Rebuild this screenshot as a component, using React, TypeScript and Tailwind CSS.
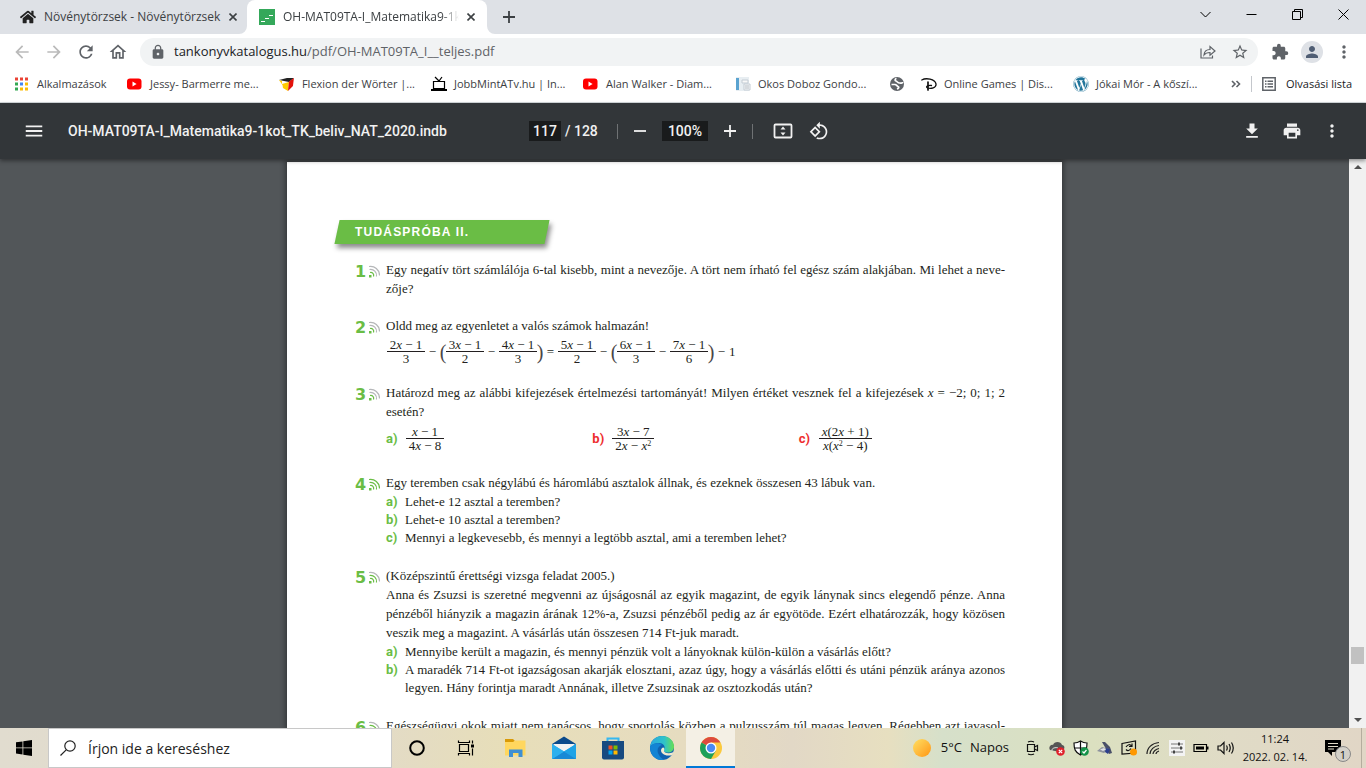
import type { ReactNode } from 'react'
import { FaHome, FaWordpress } from 'react-icons/fa'
import {
  MdArrowBack,
  MdArrowForward,
  MdExtension,
  MdLock,
  MdMenu,
  MdMoreVert,
  MdPerson,
  MdPrint,
  MdRefresh,
  MdOutlineHome,
  MdStarOutline,
} from 'react-icons/md'

function YouTubeIcon() {
  return (
    <svg viewBox="0 0 16 16" className="size-4">
      <rect x="0" y="2.5" width="14.5" height="11" rx="3" fill="#f00" />
      <path d="M5.500 5.600v4.800L9.600 8z" fill="#fff" />
    </svg>
  )
}

function AppsIcon() {
  const colors = ['#ea4335', '#ea4335', '#ea4335', '#34a853', '#4285f4', '#fbbc04', '#34a853', '#fbbc04', '#fbbc04']
  return (
    <svg viewBox="0 0 14 14" className="size-3.5">
      {colors.map((c, i) => (
        <rect key={i} x={(i % 3) * 5} y={Math.floor(i / 3) * 5 + 0.5} width="3" height="3" fill={c} />
      ))}
    </svg>
  )
}

function CubeIcon() {
  return (
    <svg viewBox="0 0 16 16" className="size-4">
      <path d="M0 4l8-2 7 0-5 4z" fill="#222" />
      <path d="M0 4l3 1v3l7-2-1 9-5-3-.5-3z" fill="#fc0" />
      <path d="M10 5.500l5-3.500-1 8-5 5z" fill="#e3120b" />
    </svg>
  )
}

function TvIcon() {
  return (
    <svg viewBox="0 0 16 16" className="size-4" fill="none" stroke="#000" strokeWidth="1.2">
      <path d="M4 1l4 4 3-4M2.5 5.5h11v7h-11z" />
      <path d="M0 14h16" strokeWidth="2" />
    </svg>
  )
}

function DocIcon() {
  return (
    <svg viewBox="0 0 16 16" className="size-4">
      <path d="M1 1h13v14H1z" fill="#e8eef2" />
      <path d="M1 2h3v12H1z" fill="#5aa3d0" />
      <path d="M7 4h6v3H7zM9 8h6v6H9z" fill="#f8f8f8" stroke="#c4ccd4" />
      <path d="M10 10h4M10 12h4" stroke="#b4bcc4" />
    </svg>
  )
}

function GlobeIcon() {
  return (
    <svg viewBox="0 0 16 16" className="size-4">
      <circle cx="8" cy="8" r="7" fill="#5f6368" />
      <path d="M7.500 2.500c-1.500 0-2 2-.5 2.500s1.500 2 3.500 2 3 .5 3-1M2.500 8.500H6c1.500 0 1.500 1.500 3 2s.5 2-1 2.500" stroke="#fff" strokeWidth="1.700" fill="none" />
    </svg>
  )
}

function DisneyIcon() {
  return (
    <svg viewBox="0 0 16 16" className="size-4" fill="none" stroke="#111" strokeLinecap="round">
      <path d="M.8 4C5 1.500 14 3 15 8c.5 4-5 5-8.500 4-2.500-1.200.5-3 4-2.500" strokeWidth="1.300" />
      <path d="M7 6v8" strokeWidth="1.700" />
    </svg>
  )
}

function ListIcon() {
  return (
    <svg viewBox="0 0 14 14" className="size-3.5" fill="none" stroke="#5f6368" strokeWidth="1.500">
      <path d="M.8.8h12.400v12.400H.8z" />
      <path d="M3 4.200h1.500M5.500 4.200H11M3 7h1.500M5.500 7H11M3 9.800h1.500M5.500 9.800H11" />
    </svg>
  )
}

const bookmarks: { icon: ReactNode; label: string }[] = [
  { icon: <YouTubeIcon />, label: 'Jessy- Barmerre me...' },
  { icon: <CubeIcon />, label: 'Flexion der Wörter |...' },
  { icon: <TvIcon />, label: 'JobbMintATv.hu | In...' },
  { icon: <YouTubeIcon />, label: 'Alan Walker - Diam...' },
  { icon: <DocIcon />, label: 'Okos Doboz Gondo...' },
]

function CloseIcon() {
  return (
    <svg viewBox="0 0 8 8" className="size-2" stroke="#3c4043" strokeWidth="1.600">
      <path d="M.5.5l7 7M7.500.5l-7 7" />
    </svg>
  )
}

function TabStrip() {
  return (
    <header className="flex h-[34px] shrink-0 bg-[#dee1e6] text-[12px] text-[#3c4043]">
      <div className="flex w-[247px] items-center pl-5">
        <FaHome className="size-4 text-[#222]" />
        <span className="ml-2 flex-1 whitespace-nowrap">Növénytörzsek - Növénytörzsek</span>
        <button aria-label="Bezárás" className="mr-2 p-0.5">
          <CloseIcon />
        </button>
      </div>
      <div className="relative flex w-60 items-center rounded-t-lg bg-white pl-3">
        <svg viewBox="0 0 8 8" className="absolute bottom-0 -left-2 size-2">
          <path d="M8 0v8H0a8 8 0 0 0 8-8" fill="#fff" />
        </svg>
        <svg viewBox="0 0 8 8" className="absolute -right-2 bottom-0 size-2">
          <path d="M0 0v8h8a8 8 0 0 1-8-8" fill="#fff" />
        </svg>
        <svg viewBox="0 0 16 16" className="size-4">
          <path d="M0 0h16v16H0z" fill="#34a85a" />
          <path d="M2 12.500h4M6 9.500h4M10 6.500h4" stroke="#fff" />
        </svg>
        <span className="ml-2 w-[176px] overflow-hidden whitespace-nowrap [mask-image:linear-gradient(to_right,#000_90%,transparent)]">
          OH-MAT09TA-I_Matematika9-1kot
        </span>
        <button aria-label="Bezárás" className="ml-1.5 p-0.5">
          <CloseIcon />
        </button>
      </div>
      <button aria-label="Új lap" className="ml-4 self-center">
        <svg viewBox="0 0 12 12" className="size-3" stroke="#3c4043" strokeWidth="1.800">
          <path d="M6 0v12M0 6h12" />
        </svg>
      </button>
      <div className="ml-auto flex h-7">
        {[
          ['Lapkeresés', 'M.5 3l5 5 5-5'],
          ['Kis méret', 'M.5 5.500h10'],
          ['Előző méret', 'M.5 2.500h8v8h-8zM2.500 2.500v-2h8v8h-2'],
          ['Bezárás', 'M.5.5l10 10M10.500.5l-10 10'],
        ].map(([label, d]) => (
          <button key={label} aria-label={label} className="grid w-[46px] place-items-center">
            <svg viewBox="0 0 11 11" className="size-[11px]" fill="none" stroke="#000" strokeWidth="1">
              <path d={d} />
            </svg>
          </button>
        ))}
      </div>
    </header>
  )
}

function IconButton({ label, children }: { label: string; children: ReactNode }) {
  return (
    <button aria-label={label} className="grid size-8 shrink-0 place-items-center">
      {children}
    </button>
  )
}

function AddressBar() {
  return (
    <div className="flex h-9 shrink-0 items-center px-1.5 text-[#5f6368]">
      <IconButton label="Vissza"><MdArrowBack className="size-5 text-[#bababa]" /></IconButton>
      <IconButton label="Előre"><MdArrowForward className="size-5 text-[#bababa]" /></IconButton>
      <IconButton label="Újratöltés"><MdRefresh className="size-5" /></IconButton>
      <IconButton label="Kezdőlap"><MdOutlineHome className="size-5" /></IconButton>
      <div className="mx-1.5 flex h-7 flex-1 items-center rounded-full bg-[#f1f3f4] pr-0.5 pl-2.5">
        <MdLock className="size-4" />
        <a href="#" className="ml-2 flex-1 text-[13px] whitespace-nowrap">
          <span className="text-[#202124]">tankonyvkatalogus.hu</span>/pdf/OH-MAT09TA_I__teljes.pdf
        </a>
        <IconButton label="Megosztás">
          <svg viewBox="0 0 16 16" className="size-4" fill="none" stroke="#5f6368" strokeWidth="1.200">
            <path d="M1 4.500v9.500h11.500v-2.500M4 11c.3-4 2.500-5.500 6-5.500V2.500l5 4.500-5 4.300V8.500C7.500 8.500 5.500 9 4 11z" />
          </svg>
        </IconButton>
        <IconButton label="Könyvjelző"><MdStarOutline className="size-[18px]" /></IconButton>
      </div>
      <IconButton label="Bővítmények"><MdExtension className="size-[18px]" /></IconButton>
      <IconButton label="Profil">
        <span className="grid size-[22px] place-items-center rounded-full bg-[#dee1e6]">
          <MdPerson className="size-[18px] text-[#505e74]" />
        </span>
      </IconButton>
      <IconButton label="Menü"><MdMoreVert className="size-5" /></IconButton>
    </div>
  )
}

function Bookmark({ icon, label }: { icon: ReactNode; label: string }) {
  return (
    <a href="#" className="flex w-[136px] items-center gap-[7px] whitespace-nowrap">
      {icon}
      {label}
    </a>
  )
}

function BookmarksBar() {
  return (
    <nav className="flex h-8 shrink-0 items-center gap-4 pr-3.5 pb-1 pl-[15px] text-[11px] text-[#3c4043]">
      <a href="#" className="flex w-24 items-center gap-2">
        <AppsIcon />
        Alkalmazások
      </a>
      {bookmarks.map((b) => (
        <Bookmark key={b.label} {...b} />
      ))}
      <a href="#" aria-label="Weboldal" className="ml-0.5"><GlobeIcon /></a>
      <Bookmark icon={<DisneyIcon />} label="Online Games | Dis..." />
      <Bookmark icon={<FaWordpress className="size-4 text-[#21759b]" />} label="Jókai Mór - A kőszí..." />
      <div className="ml-auto flex items-center whitespace-nowrap">
        <button aria-label="További könyvjelzők">
          <svg viewBox="0 0 10 8" className="h-2 w-2.5" fill="none" stroke="#5f6368" strokeWidth="1.600">
            <path d="M1 1l3 3-3 3M5.500 1l3 3-3 3" />
          </svg>
        </button>
        <span className="mx-2.5 h-4 w-px bg-[#c4c7cc]" />
        <button className="flex items-center gap-2.5 text-[#202124]">
          <ListIcon />
          Olvasási lista
        </button>
      </div>
    </nav>
  )
}

function PdfToolbar() {
  return (
    <div className="z-10 flex h-14 shrink-0 items-center bg-[#323639] font-[Roboto] text-[14px] font-medium text-[#f1f1f1] shadow-[0_2px_4px_rgba(0,0,0,0.4)]">
      <div className="flex flex-1 items-center gap-[18px] pl-[18px]">
        <IconButton label="Menü"><MdMenu className="size-[22px]" /></IconButton>
        <h1 className="whitespace-nowrap">OH-MAT09TA-I_Matematika9-1kot_TK_beliv_NAT_2020.indb</h1>
      </div>
      <div className="flex items-center pr-0.5">
        <label className="flex w-17 items-center gap-1 whitespace-nowrap">
          <input aria-label="Oldalszám" defaultValue="117" className="h-5 w-8 bg-[#191b1c] text-center" />
          <span>/&nbsp;128</span>
        </label>
        <span className="mr-1.5 ml-5 h-[15px] w-px bg-[#6f7274]" />
        <div className="flex items-center gap-1.5">
          <IconButton label="Kicsinyítés">
            <svg viewBox="0 0 12 12" className="size-3" stroke="#f1f1f1" strokeWidth="1.800"><path d="M0 6h12" /></svg>
          </IconButton>
          <input aria-label="Nagyítás" defaultValue="100%" className="h-5 w-[46px] bg-[#191b1c] text-center" />
          <IconButton label="Nagyítás növelése">
            <svg viewBox="0 0 12 12" className="size-3" stroke="#f1f1f1" strokeWidth="1.800"><path d="M0 6h12M6 0v12" /></svg>
          </IconButton>
        </div>
        <span className="mr-3.5 ml-1.5 h-[15px] w-px bg-[#6f7274]" />
        <div className="flex gap-1">
          <IconButton label="Oldalhoz igazítás">
            <svg viewBox="0 0 20 16" className="h-4 w-5" fill="#f1f1f1">
              <rect x="1.500" y="1.500" width="17" height="13" rx="1" fill="none" stroke="#f1f1f1" strokeWidth="1.800" />
              <path d="M10 3.500L12.500 6.500h-5zM10 12.500L12.500 9.500h-5z" />
            </svg>
          </IconButton>
          <IconButton label="Forgatás">
            <svg viewBox="0 0 24 24" className="size-5" fill="#f1f1f1">
              <path d="M7.340 6.410L.86 12.900l6.490 6.480 6.490-6.480-6.500-6.490zM3.690 12.900l3.660-3.660L11 12.900l-3.660 3.660-3.650-3.660zm15.670-6.260C17.610 4.880 15.300 4 13 4V.76L8.760 5 13 9.240V6c1.790 0 3.580.68 4.950 2.050 2.730 2.730 2.730 7.170 0 9.900C16.580 19.320 14.790 20 13 20c-.97 0-1.940-.21-2.840-.61l-1.490 1.490C10.020 21.620 11.510 22 13 22c2.300 0 4.610-.88 6.360-2.640 3.520-3.510 3.520-9.210 0-12.720z" />
            </svg>
          </IconButton>
        </div>
      </div>
      <div className="flex flex-1 justify-end gap-2 pr-[18px]">
        <IconButton label="Letöltés">
          <svg viewBox="0 0 24 24" className="size-5" fill="#f1f1f1">
            <path d="M19 9h-4V3H9v6H5l7 7 7-7zM5 18v2h14v-2H5z" />
          </svg>
        </IconButton>
        <IconButton label="Nyomtatás"><MdPrint className="size-5" /></IconButton>
        <IconButton label="Továbbiak"><MdMoreVert className="size-5" /></IconButton>
      </div>
    </div>
  )
}

function Frac({ top, bottom, wide }: { top: ReactNode; bottom: ReactNode; wide?: boolean }) {
  const pad = wide ? 'px-[3px]' : ''
  return (
    <span className={`inline-flex flex-col text-center leading-[13px] whitespace-nowrap ${wide ? '' : 'w-[38px]'}`}>
      <span className={`border-b border-[#231f20] ${pad}`}>{top}</span>
      <span className={pad}>{bottom}</span>
    </span>
  )
}

function Op({ children }: { children: ReactNode }) {
  return <span className="w-[15px] text-center">{children}</span>
}

function Paren({ children }: { children: ReactNode }) {
  return <span className="flex w-1.5 justify-center text-[20px] leading-6 text-[#4a4647]">{children}</span>
}

const x = <i>x</i>

// One printed line stretched to both margins
function Full({ children }: { children: ReactNode }) {
  return <span className="block whitespace-nowrap [text-align-last:justify]">{children}</span>
}

function Label({ children, red }: { children: ReactNode; red?: boolean }) {
  return (
    <span className={`w-[19px] shrink-0 font-[Roboto] font-bold ${red ? 'text-[#ee2e2e]' : 'text-[#6abd45]'}`}>
      {children}
    </span>
  )
}

function Item({ label, children }: { label: string; children: ReactNode }) {
  return (
    <li className="flex leading-[18px]">
      <Label>{label}</Label>
      <div className="flex-1">{children}</div>
    </li>
  )
}

function Problem({ n, level, children }: { n: number; level: number; children: ReactNode }) {
  const arcs = ['M1 7.500a3 3 0 0 1 3.500 4', 'M.5 4.500a6 6 0 0 1 7 7', 'M0 1.500a9 9 0 0 1 10.500 9']
  return (
    <section className="flex">
      <div className="flex w-[31px] shrink-0 pt-0.5">
        <span className="w-3.5 font-['DejaVu_Sans'] text-[16px] leading-[19px] font-bold text-[#6abd45]">{n}</span>
        <svg viewBox="0 0 11 13" className="mt-[3px] h-[13px] w-[11px]" fill="none">
          <path d="M0 10h2.500v2.500H0z" fill="#6abd45" />
          {arcs.map((d, i) => (
            <path key={d} d={d} stroke={i < level ? '#6abd45' : '#b5b7b9'} strokeWidth="1.200" />
          ))}
        </svg>
      </div>
      <div className="flex-1">{children}</div>
    </section>
  )
}

function PdfPage() {
  return (
    <article className="w-[775px] bg-white pt-[58px] pr-[57px] pl-[68px] font-['Liberation_Serif'] text-[13px] leading-[19px] text-[#231f20] shadow-[0_0_5px_2px_rgba(0,0,0,0.35)]">
      <h2 className="relative -ml-[18px] h-6 w-[210px] pl-[18px] font-['Liberation_Sans'] text-[12px] leading-6 font-bold tracking-widest text-white">
        <span className="absolute inset-0 -skew-x-12 bg-[#6abd45] shadow-[3px_4px_5px_rgba(0,0,0,0.45)]" />
        <span className="relative">TUDÁSPRÓBA II.</span>
      </h2>

      <div className="mt-4 flex flex-col gap-[18px]">
        <Problem n={1} level={1}>
          <p>
            <Full>Egy negatív tört számlálója 6-tal kisebb, mint a nevezője. A tört nem írható fel egész szám alakjában. Mi lehet a neve-</Full>
            zője?
          </p>
        </Problem>

        <Problem n={2} level={1}>
          <p>Oldd meg az egyenletet a valós számok halmazán!</p>
          <div className="mt-[3px] flex items-center pl-px">
            <Frac top={<>2{x} − 1</>} bottom="3" />
            <Op>−</Op>
            <Paren>(</Paren>
            <Frac top={<>3{x} − 1</>} bottom="2" />
            <Op>−</Op>
            <Frac top={<>4{x} − 1</>} bottom="3" />
            <Paren>)</Paren>
            <Op>=</Op>
            <Frac top={<>5{x} − 1</>} bottom="2" />
            <Op>−</Op>
            <Paren>(</Paren>
            <Frac top={<>6{x} − 1</>} bottom="3" />
            <Op>−</Op>
            <Frac top={<>7{x} − 1</>} bottom="6" />
            <Paren>)</Paren>
            <Op>−</Op>
            <span>1</span>
          </div>
        </Problem>

        <Problem n={3} level={1}>
          <p>
            <Full>Határozd meg az alábbi kifejezések értelmezési tartományát! Milyen értéket vesznek fel a kifejezések {x} = −2; 0; 1; 2</Full>
            esetén?
          </p>
          <div className="mt-1 mb-[3px] grid grid-cols-3">
            <div className="flex items-center gap-px">
              <Label>a)</Label>
              <Frac top={<>{x} − 1</>} bottom={<>4{x} − 8</>} />
            </div>
            <div className="flex items-center gap-px">
              <Label red>b)</Label>
              <Frac wide top={<>3{x} − 7</>} bottom={<>2{x} − {x}<sup className="text-[8px]">2</sup></>} />
            </div>
            <div className="flex items-center gap-px">
              <Label red>c)</Label>
              <Frac wide top={<>{x}(2{x} + 1)</>} bottom={<>{x}({x}<sup className="text-[8px]">2</sup> − 4)</>} />
            </div>
          </div>
        </Problem>

        <Problem n={4} level={3}>
          <p>Egy teremben csak négylábú és háromlábú asztalok állnak, és ezeknek összesen 43 lábuk van.</p>
          <ul className="py-px">
            <Item label="a)">Lehet-e 12 asztal a teremben?</Item>
            <Item label="b)">Lehet-e 10 asztal a teremben?</Item>
            <Item label="c)">Mennyi a legkevesebb, és mennyi a legtöbb asztal, ami a teremben lehet?</Item>
          </ul>
        </Problem>

        <Problem n={5} level={2}>
          <p>(Középszintű érettségi vizsga feladat 2005.)</p>
          <p>
            <Full>Anna és Zsuzsi is szeretné megvenni az újságosnál az egyik magazint, de egyik lánynak sincs elegendő pénze. Anna</Full>
            <Full>pénzéből hiányzik a magazin árának 12%-a, Zsuzsi pénzéből pedig az ár egyötöde. Ezért elhatározzák, hogy közösen</Full>
            veszik meg a magazint. A vásárlás után összesen 714 Ft-juk maradt.
          </p>
          <ul className="py-px">
            <Item label="a)">Mennyibe került a magazin, és mennyi pénzük volt a lányoknak külön-külön a vásárlás előtt?</Item>
            <Item label="b)">
              <Full>A maradék 714 Ft-ot igazságosan akarják elosztani, azaz úgy, hogy a vásárlás előtti és utáni pénzük aránya azonos</Full>
              legyen. Hány forintja maradt Annának, illetve Zsuzsinak az osztozkodás után?
            </Item>
          </ul>
        </Problem>

        <Problem n={6} level={2}>
          <Full>Egészségügyi okok miatt nem tanácsos, hogy sportolás közben a pulzusszám túl magas legyen. Régebben azt javasol-</Full>
        </Problem>
      </div>
    </article>
  )
}

function Scrollbar() {
  return (
    <div className="flex w-[17px] shrink-0 flex-col items-center justify-between bg-[#f1f1f1] py-1.5">
      <svg viewBox="0 0 8 4" className="h-1 w-2"><path d="M0 4l4-4 4 4z" fill="#505050" /></svg>
      <div className="flex flex-1 flex-col justify-end pb-[54px]">
        <div className="h-[17px] w-[13px] bg-[#c1c1c1]" />
      </div>
      <svg viewBox="0 0 8 4" className="h-1 w-2"><path d="M0 0l4 4 4-4z" fill="#505050" /></svg>
    </div>
  )
}

const pinned: { label: string; icon: ReactNode; active?: boolean }[] = [
  {
    label: 'Cortana',
    icon: (
      <svg viewBox="0 0 24 24" className="size-6" fill="none" stroke="#000" strokeWidth="2">
        <circle cx="12" cy="12" r="6.800" />
      </svg>
    ),
  },
  {
    label: 'Feladatnézet',
    icon: (
      <svg viewBox="0 0 24 24" className="size-6" fill="none" stroke="#000" strokeWidth="1.200">
        <path d="M5.500 8.500h9v7h-9zM4.500 4.500v2h11v-2M4.500 19.500v-2h11v2M18.500 4.500v3M18.500 12.500v7" />
        <path d="M17 8.500h3v3h-3z" fill="#000" stroke="none" />
      </svg>
    ),
  },
  {
    label: 'Fájlkezelő',
    icon: (
      <svg viewBox="0 0 24 24" className="size-6">
        <path d="M2 3h8l2 2v4H2z" fill="#d99a07" />
        <path d="M2 6h8l2-1.500h10.500v15H2z" fill="#ffd75e" />
        <path d="M6 21v-7.500h13.500V21h-4v-4h-5.500v4z" fill="#3f8fd2" />
      </svg>
    ),
  },
  {
    label: 'Posta',
    icon: (
      <svg viewBox="0 0 24 24" className="size-6">
        <path d="M0 8l12-7.500L24 8v6H0z" fill="#0a4a8c" />
        <path d="M1.500 8h21v7h-21z" fill="#f2f2f2" />
        <path d="M0 8l12 7.500L24 8v15H0z" fill="#2cb0ee" />
        <path d="M12 15.500L24 8v15z" fill="#1fa3e6" />
        <path d="M12 15.500L24 23H0z" fill="#1889d6" />
        <path d="M0 8l12 7.500L0 23z" fill="#2cb0ee" />
      </svg>
    ),
  },
  {
    label: 'Áruház',
    icon: (
      <svg viewBox="0 0 24 24" className="size-6">
        <path d="M6.500 6V2.500h11V6" fill="none" stroke="#35b8f1" strokeWidth="2" />
        <path d="M1 5h22v16.500a2 2 0 0 1-2 2H3a2 2 0 0 1-2-2z" fill="#174a80" />
        <path d="M7.500 9.500h4v4h-4z" fill="#f25022" />
        <path d="M12.500 9.500h4v4h-4z" fill="#7fba00" />
        <path d="M7.500 14.500h4v4h-4z" fill="#00a4ef" />
        <path d="M12.500 14.500h4v4h-4z" fill="#ffb900" />
      </svg>
    ),
  },
  {
    label: 'Edge',
    icon: (
      <svg viewBox="0 0 24 24" className="size-6">
        <defs>
          <linearGradient id="edgeTop">
            <stop offset="0" stopColor="#2aa8e0" />
            <stop offset="0.6" stopColor="#2fc3c9" />
            <stop offset="1" stopColor="#66e050" />
          </linearGradient>
        </defs>
        <circle cx="12" cy="12" r="12" fill="#0f62b0" />
        <path d="M0 11C1 4 6 0 12 0c7 0 12 5 12 10.500 0 4-3 6-6 6-3.500 0-4.500-1.500-4-2.500 2-4-1-7-5-7S1.500 8.500 0 11z" fill="url(#edgeTop)" />
        <path d="M0 11C2 7 9 6 12 9c-4 1-6 5-3 10 1 2 3 4 5 4.800C6 25.500 0 19 0 11z" fill="#1384d4" />
        <path d="M13.500 11.500c1.500 1 .5 2.500.5 3.500s2 2.500 5 2.300c2-.1 3.500-.8 5-1.800l-1.800 3.500C15 21 11 17 11 14.500c0-1.500 1-3 2.500-3z" fill="#f0ead0" />
      </svg>
    ),
  },
  {
    label: 'Chrome',
    active: true,
    icon: (
      <svg viewBox="0 0 24 24" className="size-6">
        <circle cx="12" cy="12" r="11" fill="#fbc93d" />
        <path d="M12 12L2.500 6.500A11 11 0 0 1 21.500 6.500H12z" fill="#dd4b3e" />
        <path d="M2.500 6.500A11 11 0 0 0 12 23l4.800-8.200L12 12z" fill="#1ca05a" />
        <circle cx="12" cy="12" r="5.500" fill="#fff" />
        <circle cx="12" cy="12" r="4.200" fill="#4a8af4" />
      </svg>
    ),
  },
]

function TrayIcons() {
  return (
    <div className="flex items-center gap-2">
      <svg viewBox="0 0 16 16" className="size-4" fill="none" stroke="#111" strokeWidth="1.200">
        <path d="M2.500 4.500h7v7h-7zM9.500 7l3-1.500v5l-3-1.500M3 2q3-1.500 6 0M3 14q3 1.500 6 0" />
      </svg>
      <svg viewBox="0 0 16 16" className="size-4">
        <path d="M1 10C-1 7 2 4 4 5c1-4 8-4 9 0 2 0 3 2 2 4l-4 3z" fill="#555" />
        <path d="M3 11c-1-3 4-4 6-3" stroke="#ddd" fill="none" />
        <circle cx="11.500" cy="11.500" r="4.300" fill="#e0202b" />
        <path d="M9.800 9.800l3.400 3.400M13.200 9.800l-3.400 3.400" stroke="#fff" strokeWidth="1.200" />
      </svg>
      <svg viewBox="0 0 16 16" className="size-4">
        <path d="M7.500 1q3 2 6.500 2c0 6-1 9-6.500 12C2 12 1 9 1 3q3.500 0 6.500-2z" fill="#fff" stroke="#111" strokeWidth="1.200" />
        <path d="M7.500 1v14M1 8h13" stroke="#111" strokeWidth="1.200" />
        <circle cx="11.500" cy="11.500" r="4.300" fill="#15934a" />
        <path d="M9.500 11.500l1.500 1.500 2.500-3" stroke="#fff" strokeWidth="1.200" fill="none" />
      </svg>
      <svg viewBox="0 0 16 16" className="size-4">
        <path d="M5 2l3 0 5 5 2 6-3 1z" fill="#4a5068" />
        <path d="M0 11l5-4 7 2-5 4z" fill="#8d929e" />
        <path d="M9 8l4 1-2 5-3-2z" fill="#2c3f8c" />
        <path d="M3 9.500l4-1.500 2 1.500-3 1.500z" fill="#dfe2e8" />
      </svg>
      <svg viewBox="0 0 16 16" className="size-4" fill="none" stroke="#111" strokeWidth="1.200">
        <path d="M1 3.500L14.500 1v12l-13.500 1zM5 7q3-4 5.500-1M11 3.500V6.500H8M10 8.500q-2.500 3.500-5 1" />
        <circle cx="12.500" cy="12" r="3.500" fill="#ff9800" stroke="none" />
      </svg>
      <svg viewBox="0 0 16 16" className="size-4" fill="none" stroke="#222" strokeWidth="1.200">
        <path d="M2 14C2 8 7 3 14 2.500M5 14c0-4 4-8 9-8.500M8 14c0-2.500 3-5 6-5.500M11 14c0-1 1.500-2.500 3-3" />
      </svg>
      <svg viewBox="0 0 16 16" className="size-4">
        <path d="M0 0h16v16H0z" fill="#f3f3f3" />
        <path d="M2 4h12M2 8h12M2 12h12" stroke="#777" />
        <path d="M9 2.500h2v3H9zM11 6.500h2v3h-2zM4 10.500h2v3H4z" fill="#444" />
      </svg>
      <svg viewBox="0 0 16 16" className="size-4">
        <path d="M1 4.500h12.500v7H1z" fill="none" stroke="#000" strokeWidth="1.200" />
        <path d="M3 6.500h8v3H3zM14 6.500h1.500v3H14z" />
      </svg>
      <svg viewBox="0 0 18 16" className="h-4 w-[18px]" fill="none" stroke="#111" strokeWidth="1.200">
        <path d="M1 6h2.500L7 2.500v11L3.500 10H1zM9.500 5.500q1.500 2.500 0 5M12 4q2.500 4 0 8M14.500 2.500q3.500 5.500 0 11" />
      </svg>
    </div>
  )
}

function Taskbar() {
  return (
    <footer className="flex h-10 shrink-0 bg-[linear-gradient(90deg,#e1dccf_0%,#e3dbc6_28%,#e7deb9_37%,#e6dcc0_50%,#e2d8c6_58%,#e7dfc0_65%,#d6e0ca_69%,#dbe0c0_80%,#e0dbc6_90%,#e1d6c6_100%)] text-[#111]">
      <button aria-label="Start" className="grid w-12 place-items-center">
        <svg viewBox="0 0 16 16" className="size-4">
          <path d="M0 2.300L6.500 1.400v6.100H0zM7.300 1.300L16 0v7.500H7.300zM0 8.300h6.500v6.200L0 13.600zM7.300 8.300H16V16l-8.700-1.200z" />
        </svg>
      </button>
      <label className="flex w-[344px] items-center gap-3 border border-[#c8c8c8] bg-white pl-[11px]">
        <svg viewBox="0 0 16 16" className="size-4" fill="none" stroke="#222" strokeWidth="1.200">
          <circle cx="10" cy="6" r="5.200" />
          <path d="M6.200 9.800L.5 15.500" />
        </svg>
        <input aria-label="Keresés" placeholder="Írjon ide a kereséshez" className="flex-1 text-[14px] placeholder:text-[#222]" />
      </label>
      {pinned.map((app) => (
        <button
          key={app.label}
          aria-label={app.label}
          className={`grid w-[49px] place-items-center border-y-2 border-t-transparent ${app.active ? 'border-b-[#0078d7] bg-[#f4f0e5]' : 'border-b-transparent'}`}
        >
          {app.icon}
        </button>
      ))}
      <div className="ml-auto flex items-center">
        <span className="size-[18px] rounded-full bg-linear-to-br from-[#ffe060] to-[#ff9500]" />
        <span className="mr-4 ml-2.5 flex gap-2 text-[13px]">
          <span>5°C</span>
          <span>Napos</span>
        </span>
        <TrayIcons />
        <div className="w-20 text-center text-[11px] leading-[18px] whitespace-nowrap">
          <p>11:24</p>
          <p>2022. 02. 14.</p>
        </div>
        <button aria-label="Értesítések" className="relative ml-2 size-8">
          <svg viewBox="0 0 24 24" className="size-6">
            <path d="M2 4h16v12H9v4l-4-4H2z" />
            <path d="M5 7.500h10M5 10.500h10M5 13h6" stroke="#e0d9c6" />
          </svg>
          <span className="absolute right-1 bottom-0.5 grid size-4 place-items-center rounded-full border border-[#888] bg-[#d3d0c8] text-[11px] leading-none">
            1
          </span>
        </button>
        <span className="ml-1.5 h-10 w-[5px] border-l border-[#b5ad9e]" />
      </div>
    </footer>
  )
}

export default function App() {
  return (
    <div className="flex h-screen flex-col overflow-hidden bg-white font-['Open_Sans',sans-serif]">
      <TabStrip />
      <AddressBar />
      <BookmarksBar />
      <div className="h-px shrink-0 bg-[#d5dadd]" />
      <PdfToolbar />
      <main className="flex min-h-0 flex-1 bg-[#525659]">
        <div className="flex flex-1 justify-center overflow-hidden pt-[3px]">
          <PdfPage />
        </div>
        <Scrollbar />
      </main>
      <Taskbar />
    </div>
  )
}
